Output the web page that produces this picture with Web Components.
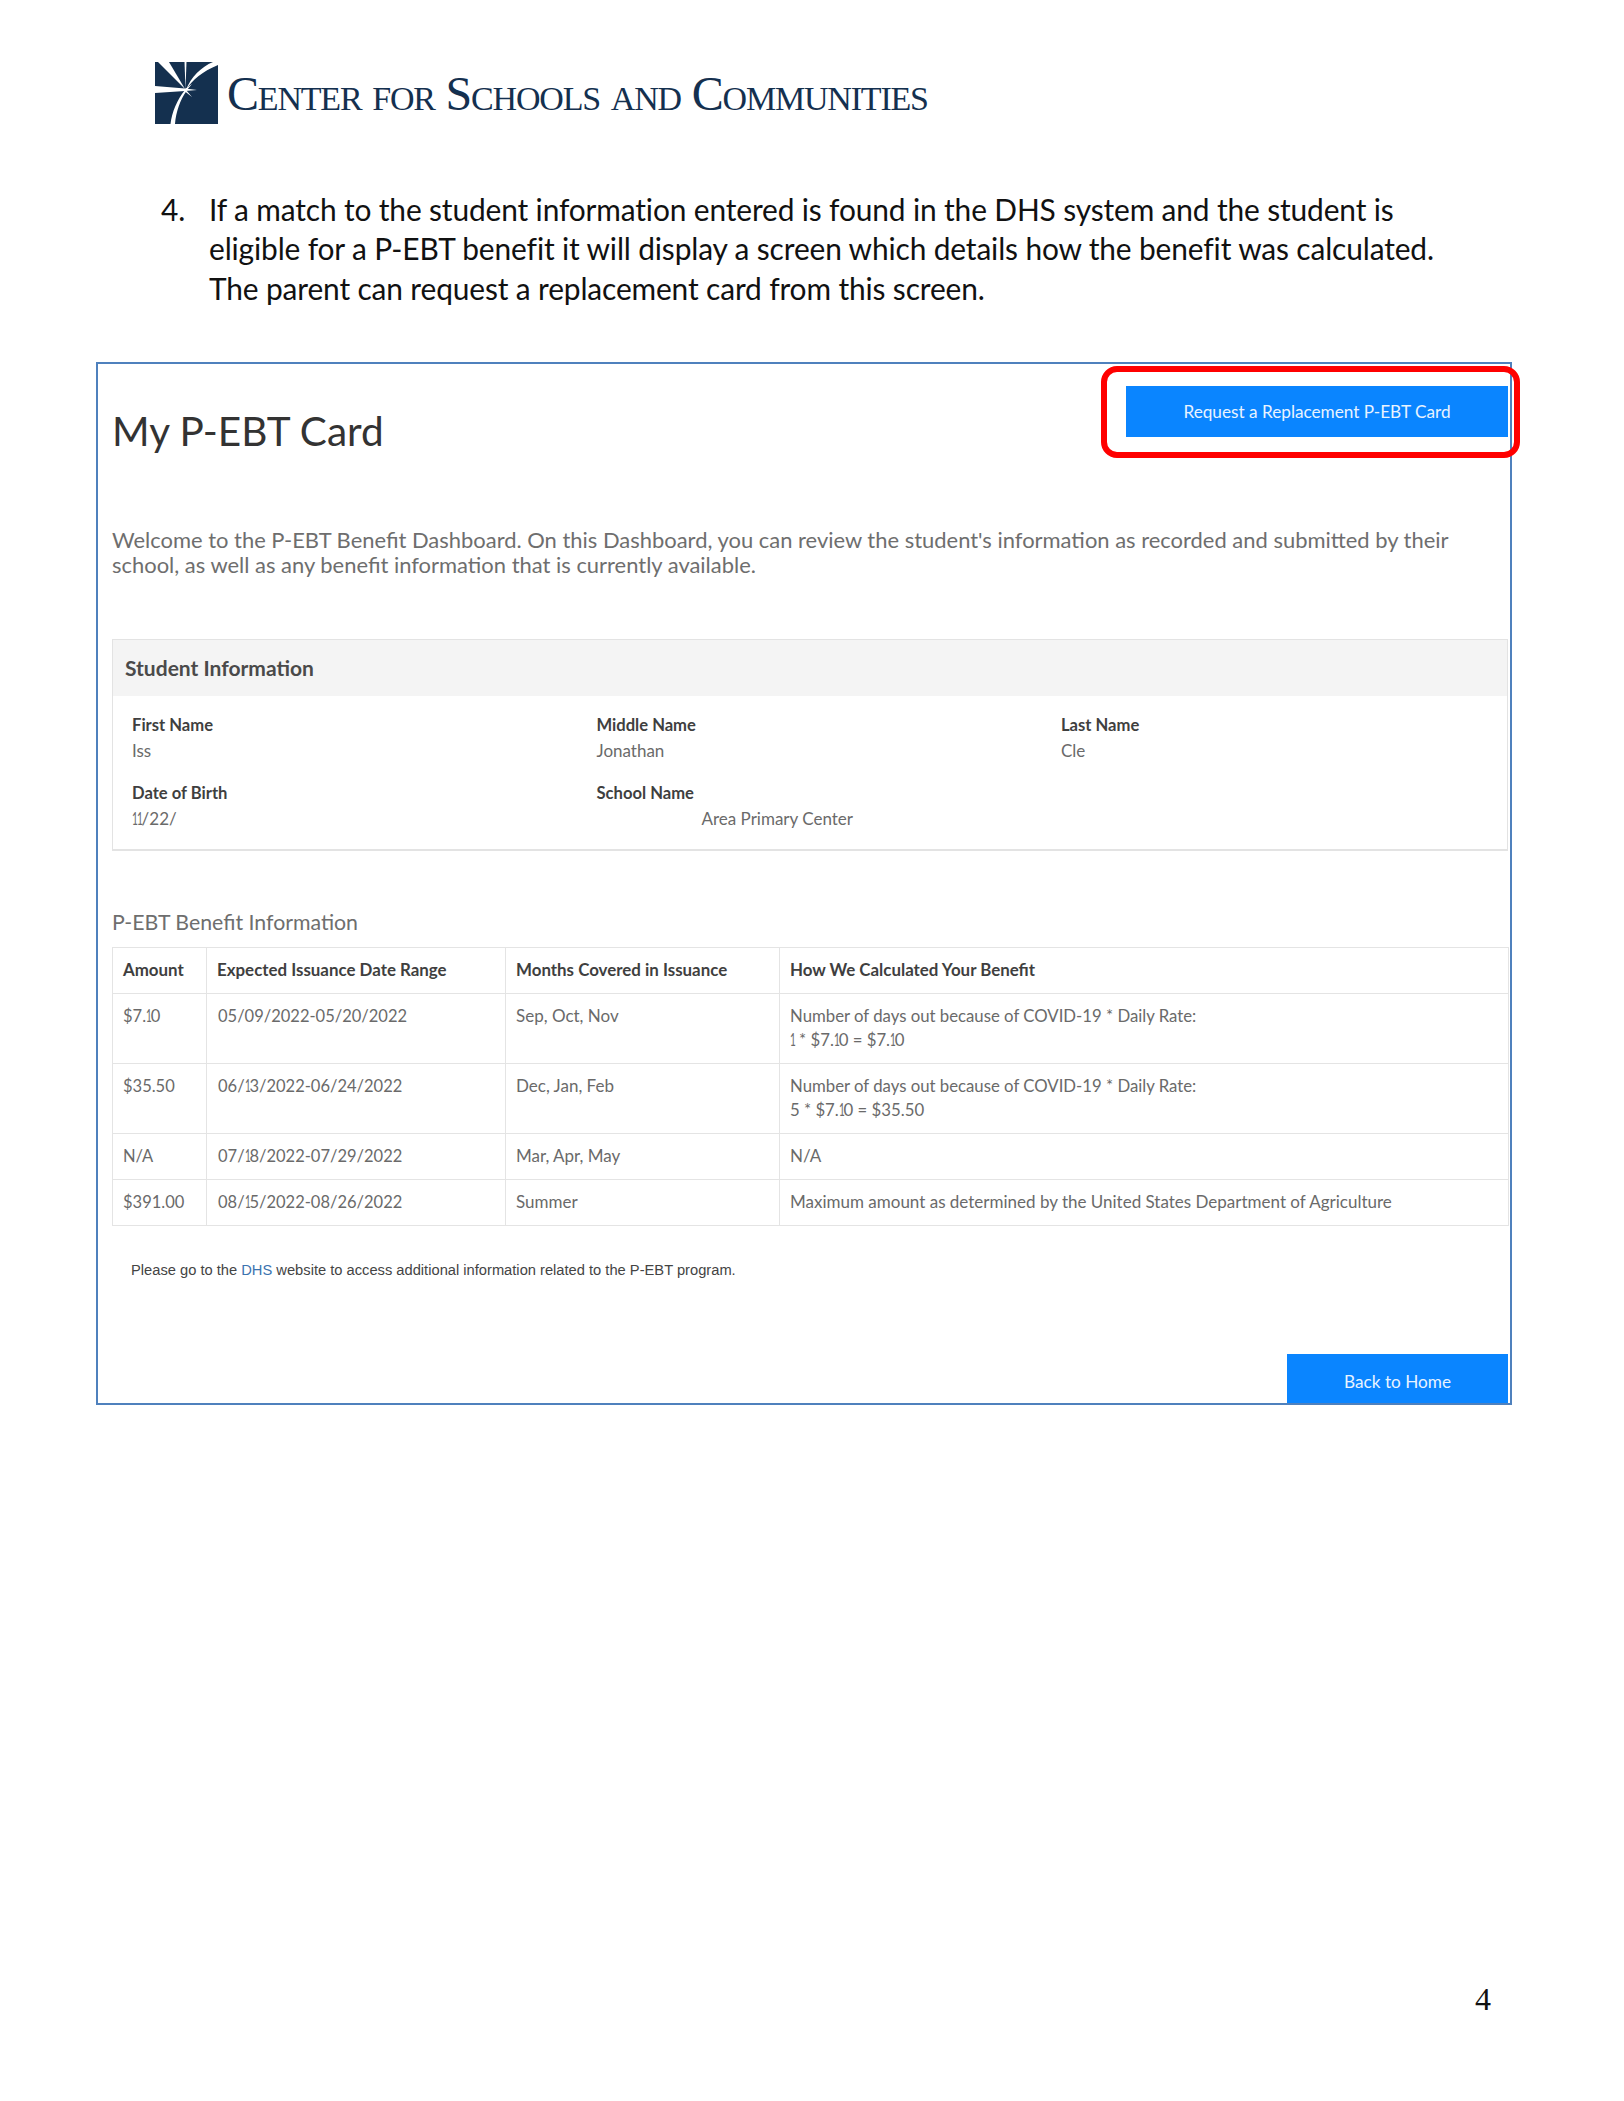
<!DOCTYPE html>
<html><head><meta charset="utf-8"><title>My P-EBT Card</title>
<style>html,body{margin:0;background:#fff}</style></head>
<body>
<doc-page>
  <doc-header>Center for Schools and Communities</doc-header>
  <doc-step num="4.">If a match to the student information entered is found in the DHS system and the student is<br>eligible for a P-EBT benefit it will display a screen which details how the benefit was calculated.<br>The parent can request a replacement card from this screen.</doc-step>
  <pebt-card></pebt-card>
  <page-num>4</page-num>
</doc-page>
<script>
function def(name, css, html){
  customElements.define(name, class extends HTMLElement{
    connectedCallback(){
      if(this.shadowRoot) return;
      const r=this.attachShadow({mode:'open'});
      r.innerHTML='<style>'+css+'</style>'+(typeof html==='function'?html(this):html);
    }
  });
}
const PN='Lato,"Open Sans",sans-serif';
const K='i.k{font-style:normal;display:inline-block;width:4.800px;transform:scaleX(.6);transform-origin:0 50%}';
const k=s=>s.replace(/1/g,'<i class="k">1</i>');
def('doc-page',`:host{display:flex;flex-direction:column;width:1624px;height:2101px;padding-top:62px;box-sizing:border-box;background:#fff}`,`<slot></slot>`);
def('doc-header',`:host{display:flex;align-items:flex-start;gap:9px;margin-left:155px;height:62px}
 svg{display:block;flex:none}
 span{font:400 48px/1 "Liberation Serif",serif;font-variant:small-caps;color:#14304f;letter-spacing:-1.190px;margin-top:8px;white-space:nowrap}`,
 `<svg width="63" height="62" viewBox="0 0 63 62" aria-hidden="true">
  <rect width="63" height="62" fill="#14304f"/>
  <g fill="#fff">
   <path d="M3 0H14L30 27Z"/>
   <path d="M29.500 0h2L30.500 27Z"/>
   <path d="M63 0V3C48 9 37 18 31 28 36 15 46 5 58 0Z"/>
   <path d="M0 24 30 26.500 42 28 30 29 0 31Z"/>
   <path d="M30 28C22 38 17 50 15.500 62H20C21 50 25 38 31.500 29Z"/>
   <path d="M30 27 37 22 31.500 28.500 37 35 30 29.500Z"/>
  </g></svg><span><slot></slot></span>`);
def('doc-step',`:host{display:flex;margin:66px 0 0 161px;font:400 29.900px/39.300px Lato,sans-serif;color:#111;letter-spacing:-.14px;white-space:nowrap}
 b{font-weight:400;width:48px;flex:none}`,t=>`<b>${t.getAttribute('num')}</b><div><slot></slot></div>`);
def('page-num',`:host{display:block;margin:576px 0 0 1475px;font:32px/36px "Liberation Serif",serif;color:#111}`,`<slot></slot>`);
def('blue-button',`:host{display:flex;align-items:center;justify-content:center;background:#0a85ff;color:#e8f3ff;font:400 17.200px/1 ${PN};box-sizing:border-box}`,`<slot></slot>`);
def('red-callout',`:host{position:absolute;left:1003px;top:2px;width:419px;height:92px;box-sizing:border-box;border:6px solid #f00;border-radius:16px;pointer-events:none}`,``);
def('info-field',`:host{display:block;font:400 17px/25px ${PN}}
 ${K}
 .l{color:#3f3f3f;font-weight:700;font-size:16.600px}.v{color:#6a6a6a}`,t=>`<div class="l">${t.getAttribute('label')}</div><div class="v" style="padding-left:${t.getAttribute('indent')||0}px">${t.hasAttribute('tight')?k(t.getAttribute('value')):t.getAttribute('value')}</div>`);
def('info-panel',`:host{display:block;margin:0 2px 0 14px;border:1px solid #e3e3e3;border-bottom-width:2px;height:212px;box-sizing:border-box}
 h2{margin:0;height:56px;background:#f4f4f4;font:700 21px/56px ${PN};color:#4a4a4a;padding-left:12px}
 .g{display:grid;grid-template-columns:repeat(3,464.500px);row-gap:17.500px;padding:17.500px 0 0 19px}`,
 `<h2>Student Information</h2><div class="g">
  <info-field label="First Name" value="Iss"></info-field>
  <info-field label="Middle Name" value="Jonathan"></info-field>
  <info-field label="Last Name" value="Cle"></info-field>
  <info-field label="Date of Birth" value="11/22/" tight></info-field>
  <info-field label="School Name" value="Area Primary Center" indent="105"></info-field>
 </div>`);
def('benefit-table',`:host{display:block;margin:0 2px 0 14px;font:400 17px/24px ${PN};color:#6a6a6a}
 ${K}
 table{border-collapse:collapse;width:1397px;table-layout:fixed}
 th,td{border:1px solid #e4e4e4;padding:10.500px 10px;text-align:left;vertical-align:top}
 th{font-weight:700;color:#3f3f3f;font-size:16.900px}
 td.n{font-size:16.500px}
 td.d{padding-left:11px}
 td.f{font-size:16.750px}`,
 `<table><colgroup><col style="width:94px"><col style="width:299px"><col style="width:274px"><col></colgroup>
 <tr><th>Amount</th><th>Expected Issuance Date Range</th><th>Months Covered in Issuance</th><th>How We Calculated Your Benefit</th></tr>
 <tr><td class="n">${k('$7.10')}</td><td class="n d">05/09/2022-05/20/2022</td><td>Sep, Oct, Nov</td><td class="f">Number of days out because of COVID-19 * Daily Rate:<br>${k('1 * $7.10 = $7.10')}</td></tr>
 <tr><td class="n">$35.50</td><td class="n d">${k('06/13/2022-06/24/2022')}</td><td>Dec, Jan, Feb</td><td class="f">Number of days out because of COVID-19 * Daily Rate:<br>${k('5 * $7.10 = ')}$35.50</td></tr>
 <tr><td class="n">N/A</td><td class="n d">${k('07/18/2022-07/29/2022')}</td><td>Mar, Apr, May</td><td>N/A</td></tr>
 <tr><td class="n">$391.00</td><td class="n d">${k('08/15/2022-08/26/2022')}</td><td>Summer</td><td>Maximum amount as determined by the United States Department of Agriculture</td></tr>
 </table>`);
def('pebt-card',`:host{display:flex;flex-direction:column;position:relative;margin:54px 0 0 96px;width:1416px;height:1043px;box-sizing:border-box;border:2px solid #4f81bd;font-family:${PN}}
 .top{display:flex;justify-content:space-between;align-items:flex-start;height:99px}
 h1{margin:43px 0 0 14px;font:400 40.500px/48px ${PN};color:#333}
 .btn1{width:382px;height:51px;margin:22px 2px 0 0}
 p.w{margin:64px 0 0 14px;font:400 21.950px/25px ${PN};color:#6e6e6e;white-space:nowrap}
 info-panel{margin-top:62px}
 h3{margin:57px 0 0 14px;font:400 21.300px/28px ${PN};color:#6e6e6e}
 benefit-table{margin-top:11px}
 p.n{margin:34px 0 0 33px;font:400 14.700px/20px "Liberation Sans",Arial,sans-serif;color:#444}
 p.n a{color:#3b73af;text-decoration:none}
 .btn2{width:221px;height:49px;margin:auto 2px 0 auto;padding-top:6px}`,
 `<div class="top"><h1>My P-EBT Card</h1><blue-button class="btn1">Request a Replacement P-EBT Card</blue-button></div>
 <red-callout></red-callout>
 <p class="w">Welcome to the P-EBT Benefit Dashboard. On this Dashboard, you can review the student's information as recorded and submitted by their<br>school, as well as any benefit information that is currently available.</p>
 <info-panel></info-panel>
 <h3>P-EBT Benefit Information</h3>
 <benefit-table></benefit-table>
 <p class="n">Please go to the <a href="#">DHS</a> website to access additional information related to the P-EBT program.</p>
 <blue-button class="btn2">Back to Home</blue-button>`);
</script>
</body></html>
